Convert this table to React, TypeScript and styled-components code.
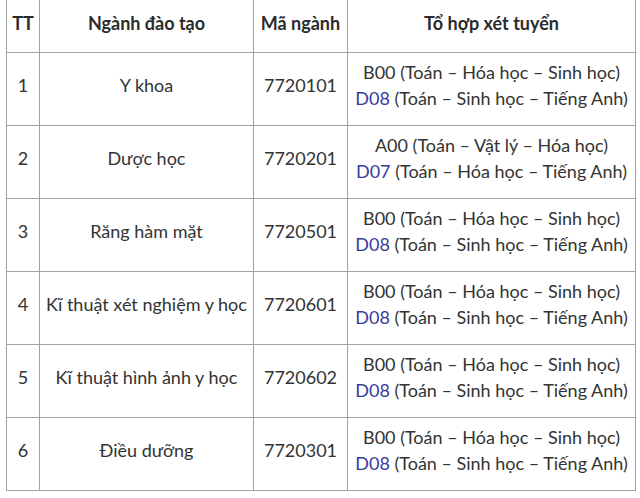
import React from 'react';
import styled, { createGlobalStyle } from 'styled-components';

const GlobalStyle = createGlobalStyle`
  html, body {
    margin: 0;
    padding: 0;
    background: #ffffff;
  }
  body {
    font-family: Lato, "Noto Sans", sans-serif;
    color: #333333;
  }
`;

interface Program {
  tt: number;
  name: string;
  code: string;
  first: string;
  second: string;
}

const programs: Program[] = [
  { tt: 1, name: 'Y khoa', code: '7720101', first: 'B00 (Toán – Hóa học – Sinh học)', second: 'D08|(Toán – Sinh học – Tiếng Anh)' },
  { tt: 2, name: 'Dược học', code: '7720201', first: 'A00 (Toán – Vật lý – Hóa học)', second: 'D07|(Toán – Hóa học – Tiếng Anh)' },
  { tt: 3, name: 'Răng hàm mặt', code: '7720501', first: 'B00 (Toán – Hóa học – Sinh học)', second: 'D08|(Toán – Sinh học – Tiếng Anh)' },
  { tt: 4, name: 'Kĩ thuật xét nghiệm y học', code: '7720601', first: 'B00 (Toán – Hóa học – Sinh học)', second: 'D08|(Toán – Sinh học – Tiếng Anh)' },
  { tt: 5, name: 'Kĩ thuật hình ảnh y học', code: '7720602', first: 'B00 (Toán – Hóa học – Sinh học)', second: 'D08|(Toán – Sinh học – Tiếng Anh)' },
  { tt: 6, name: 'Điều dưỡng', code: '7720301', first: 'B00 (Toán – Hóa học – Sinh học)', second: 'D08|(Toán – Sinh học – Tiếng Anh)' },
];

function App() {
  return (
    <>
      <GlobalStyle />
      <Page>
        <Table>
          <colgroup>
            <col style={{ width: 33 }} />
            <col style={{ width: 214 }} />
            <col style={{ width: 94 }} />
            <col style={{ width: 288 }} />
          </colgroup>
          <thead>
            <tr>
              <HeadCell>TT</HeadCell>
              <HeadCell>Ngành đào tạo</HeadCell>
              <HeadCell>Mã ngành</HeadCell>
              <HeadCell>Tổ hợp xét tuyển</HeadCell>
            </tr>
          </thead>
          <tbody>
            {programs.map((p) => {
              const [code, rest] = p.second.split('|');
              return (
                <tr key={p.tt}>
                  <Cell>{p.tt}</Cell>
                  <Cell>{p.name}</Cell>
                  <Cell>{p.code}</Cell>
                  <Cell>
                    <Line>{p.first}</Line>
                    <Line>
                      <Code>{code}</Code> {rest}
                    </Line>
                  </Cell>
                </tr>
              );
            })}
          </tbody>
        </Table>
      </Page>
    </>
  );
}

const Page = styled.div`
  padding: 0 0 0 6px;
  width: 640px;
  height: 498px;
  box-sizing: border-box;
`;

const Table = styled.table`
  border-collapse: collapse;
  table-layout: fixed;
  width: 630px;
`;

const HeadCell = styled.th`
  height: 46px;
  padding: 0 0 6px;
  border: 1px solid #a3a3a3;
  border-top: none;
  font-size: 18px;
  font-weight: 700;
  color: #2b2b2b;
  text-align: center;
  vertical-align: middle;
`;

const Cell = styled.td`
  height: 64px;
  padding: 0 0 8px;
  border: 1px solid #a3a3a3;
  font-size: 18px;
  color: #333333;
  text-align: center;
  vertical-align: middle;
  white-space: nowrap;
`;

const Line = styled.div`
  line-height: 26px;
`;

const Code = styled.span`
  color: #3b3b9e;
`;

export default App;
